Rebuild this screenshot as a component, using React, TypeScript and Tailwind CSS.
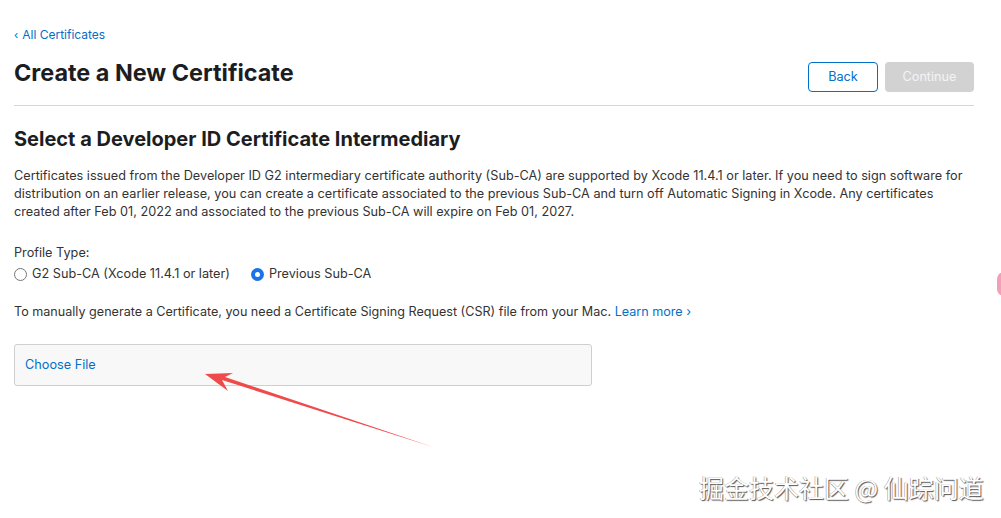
export default function App() {
  return (
    <div className="relative w-[1001px] h-[518px] overflow-hidden bg-white font-['Inter',sans-serif] text-[#1d1d1f]">
      <div className="pl-[14px] pr-[27px] pt-[28px]">
        <a className="text-[12px] text-[#0070c9] leading-[14px] flex items-center gap-[4px]">
          <span className="text-[11px]">‹</span>
          <span>All Certificates</span>
        </a>

        <div className="flex items-start justify-between mt-[13px] pb-[13px] border-b border-[#d6d6d6]">
          <h1 className="text-[23.4px] font-bold leading-[36px]">Create a New Certificate</h1>
          <div className="flex gap-[7px] mt-[7px]">
            <button className="w-[70px] h-[30px] rounded-[4px] border border-[#0070c9] text-[#0070c9] text-[12.7px]">Back</button>
            <button className="w-[89px] h-[30px] rounded-[4px] bg-[#d2d2d2] text-[#f4f4f4] text-[12.7px]">Continue</button>
          </div>
        </div>

        <h2 className="mt-[19px] text-[20px] font-bold leading-[28px]">Select a Developer ID Certificate Intermediary</h2>

        <p className="mt-[14px] text-[12.7px] leading-[18px] text-[#333]">
          Certificates issued from the Developer ID G2 intermediary certificate authority (Sub-CA) are supported by Xcode 11.4.1 or later. If you need to sign software for distribution on an earlier release, you can create a certificate associated to the previous Sub-CA and turn off Automatic Signing in Xcode. Any certificates created after Feb 01, 2022 and associated to the previous Sub-CA will expire on Feb 01, 2027.
        </p>

        <div className="mt-[23px] text-[12.7px] leading-[18px] text-[#333]">Profile Type:</div>
        <div className="mt-[3px] flex items-center gap-[21px] text-[12.7px] leading-[18px] text-[#333]">
          <label className="flex items-center gap-[5px]">
            <span className="w-[13px] h-[13px] rounded-full border border-[#767676] bg-white" />
            G2 Sub-CA (Xcode 11.4.1 or later)
          </label>
          <label className="flex items-center gap-[5px]">
            <span className="w-[13px] h-[13px] rounded-full bg-[#1a73e8] flex items-center justify-center">
              <span className="w-[5px] h-[5px] rounded-full bg-white" />
            </span>
            Previous Sub-CA
          </label>
        </div>

        <p className="mt-[20px] text-[12.6px] leading-[18px] text-[#333]">
          To manually generate a Certificate, you need a Certificate Signing Request (CSR) file from your Mac.{" "}
          <a className="text-[#0070c9]">Learn more ›</a>
        </p>

        <div className="mt-[23px] w-[578px] h-[42px] rounded-[3px] border border-[#cfcfcf] bg-[#f8f8f8] flex items-center px-[10px]">
          <span className="text-[12.7px] text-[#0070c9]">Choose File</span>
        </div>
      </div>

      <svg className="absolute left-0 top-0 pointer-events-none" width="1001" height="518">
        <polygon points="433,447 222,380 228,391 205,374 233,373 225,377" fill="#f04a4a" />
      </svg>

      <div className="absolute right-[-10px] top-[272px] w-[14px] h-[24px] rounded-full bg-[#f0a0b8]" />

      <div className="absolute left-[699px] top-[471px] text-[25px] leading-[32px] text-white font-['Noto_Sans_CJK_SC',sans-serif] [text-shadow:1px_1px_1px_#555,-0.5px_-0.5px_0_#999]">
        掘金技术社区 @ 仙踪问道
      </div>
    </div>
  );
}
